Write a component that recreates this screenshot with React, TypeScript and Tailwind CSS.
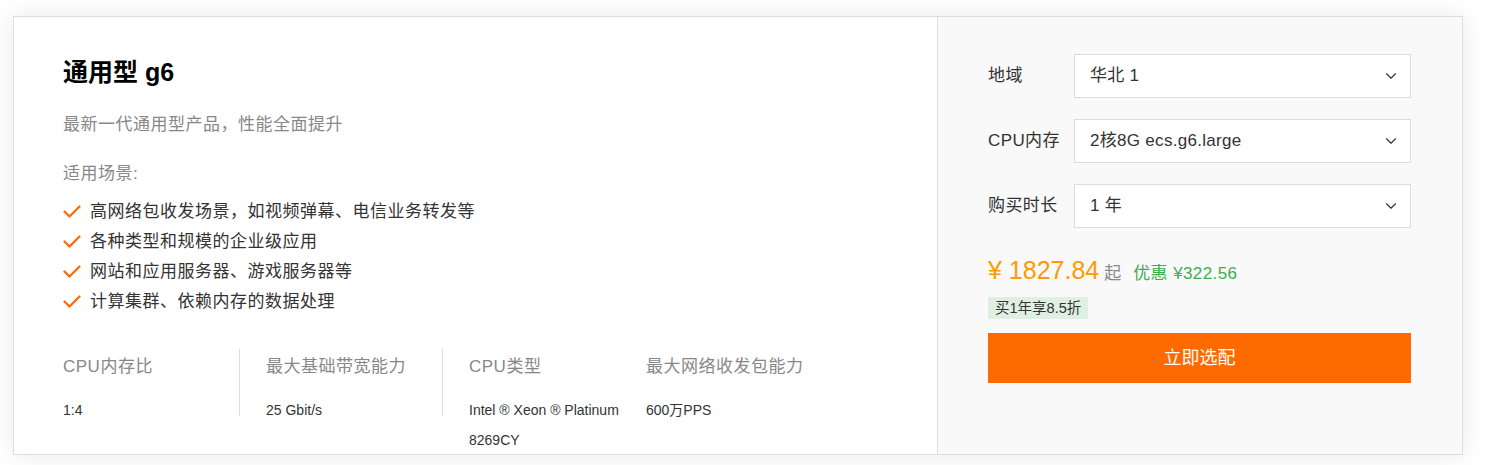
import { ChevronDown } from "lucide-react";

const font = { fontFamily: '"Liberation Sans", "Noto Sans CJK SC", sans-serif' };

const scenes = [
  "高网络包收发场景，如视频弹幕、电信业务转发等",
  "各种类型和规模的企业级应用",
  "网站和应用服务器、游戏服务器等",
  "计算集群、依赖内存的数据处理",
];

function Check() {
  return (
    <svg width="18" height="14" viewBox="0 0 18 14" className="mr-[9px] shrink-0">
      <polyline
        points="1.5,6.5 6.5,11.5 16.5,1.5"
        fill="none"
        stroke="#ff6a00"
        strokeWidth="2.2"
        strokeLinecap="round"
        strokeLinejoin="round"
      />
    </svg>
  );
}

function Spec({ label, value, className }: { label: string; value: string; className: string }) {
  return (
    <div className={"h-[67px] " + className}>
      <div className="pt-[6px] text-[17px] leading-[24px] tracking-[0.5px] text-[#888]">{label}</div>
      <div className="mt-[16px] text-[14px] leading-[30px] text-[#333]">{value}</div>
    </div>
  );
}

function Field({ label, value }: { label: string; value: string }) {
  return (
    <div className="flex items-center">
      <div className="w-[86px] text-[17px] tracking-[0.4px] text-[#333]">{label}</div>
      <div className="flex h-[44px] w-[337px] items-center justify-between border border-[#ddd] bg-white pl-[15px] pr-[10px] text-[17px] tracking-[0.3px] text-[#333]">
        <span>{value}</span>
        <ChevronDown size={18} strokeWidth={1.5} className="text-[#333]" />
      </div>
    </div>
  );
}

export default function App() {
  return (
    <div className="h-[465px] w-[1506px] bg-white pl-[13px] pt-[16px]" style={font}>
      <div className="flex h-[439px] w-[1450px] border border-[#ddd] bg-white shadow-[0_0_24px_rgba(0,0,0,0.09)]">
        <div className="flex-1 pl-[49px] pt-[39px]">
          <h1 className="text-[25px] font-bold leading-[32px] text-black">通用型 g6</h1>
          <p className="mt-[25px] text-[17px] leading-[24px] tracking-[0.5px] text-[#888]">
            最新一代通用型产品，性能全面提升
          </p>
          <p className="mt-[25px] text-[17px] leading-[24px] tracking-[0.5px] text-[#888]">适用场景:</p>
          <ul className="mt-[11px]">
            {scenes.map((s) => (
              <li key={s} className="flex items-center text-[17px] leading-[30px] tracking-[0.5px] text-[#333]">
                <Check />
                {s}
              </li>
            ))}
          </ul>
          <div className="mt-[32px] flex">
            <Spec label="CPU内存比" value="1:4" className="w-[177px] border-r border-[#ddd]" />
            <Spec label="最大基础带宽能力" value="25 Gbit/s" className="w-[203px] border-r border-[#ddd] pl-[26px]" />
            <Spec label="CPU类型" value="Intel ® Xeon ® Platinum 8269CY" className="w-[203px] pl-[26px] pr-[20px]" />
            <Spec label="最大网络收发包能力" value="600万PPS" className="w-[200px]" />
          </div>
        </div>
        <div className="w-[525px] border-l border-[#ddd] bg-[#f9f9f9] px-[50px] pt-[37px]">
          <div className="flex flex-col gap-[21px]">
            <Field label="地域" value="华北 1" />
            <Field label="CPU内存" value="2核8G ecs.g6.large" />
            <Field label="购买时长" value="1 年" />
          </div>
          <div className="mt-[26px] flex items-baseline leading-[32px]">
            <span className="text-[25px] text-[#ff9900]">¥ 1827.84</span>
            <span className="ml-[5px] text-[17px] text-[#888]">起</span>
            <span className="ml-[12px] text-[17px] tracking-[0.4px] text-[#39b04a]">优惠 ¥322.56</span>
          </div>
          <div className="mt-[7px] block h-[22px] w-fit bg-[#dff0e3] px-[7px] text-[14.5px] leading-[22px] text-[#333]">
            买1年享8.5折
          </div>
          <button className="mt-[14px] block h-[50px] w-[423px] bg-[#ff6a00] text-[18px] text-white">立即选配</button>
        </div>
      </div>
    </div>
  );
}
